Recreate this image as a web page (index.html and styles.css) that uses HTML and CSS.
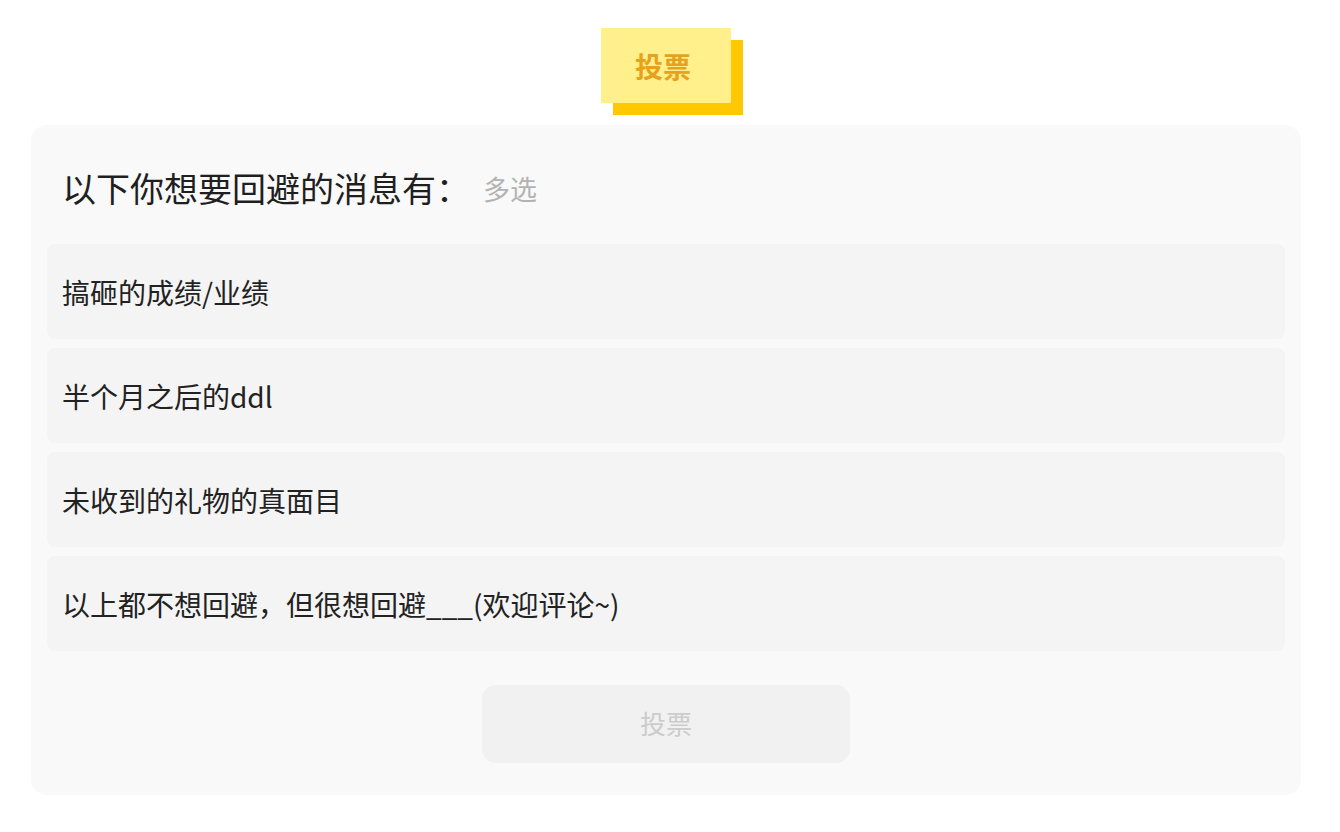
FILE: index.html
```html
<!DOCTYPE html>
<html lang="zh">
<head>
<meta charset="utf-8">
<title>投票</title>
<link rel="stylesheet" href="styles.css">
</head>
<body>
<div class="page">
  <div class="badge-wrap">
    <div class="badge">
      <span class="badge-shadow"></span>
      <span class="badge-face">投票</span>
    </div>
  </div>
  <div class="card">
    <div class="title"><span class="title-text">以下你想要回避的消息有：</span><span class="title-tag">多选</span></div>
    <div class="options">
      <div class="option">搞砸的成绩/业绩</div>
      <div class="option">半个月之后的ddl</div>
      <div class="option">未收到的礼物的真面目</div>
      <div class="option">以上都不想回避，但很想回避___(欢迎评论~)</div>
    </div>
    <div class="actions">
      <button class="vote-btn" type="button">投票</button>
    </div>
  </div>
</div>
</body>
</html>
```
FILE: styles.css
```css
* { box-sizing: border-box; }
html, body { margin: 0; padding: 0; background: #ffffff; }
body {
  font-family: "Noto Sans CJK SC", "Noto Sans", "Liberation Sans", sans-serif;
  color: #222222;
}
.page {
  width: 1270px;
  margin: 0 0 0 31px;
  padding-top: 28px;
}
.badge-wrap {
  display: flex;
  justify-content: center;
  padding-bottom: 10px;
}
.badge {
  position: relative;
  width: 142px;
  height: 87px;
  margin-left: 12px;
}
.badge-shadow {
  position: absolute;
  left: 12px;
  top: 12px;
  width: 130px;
  height: 75px;
  background: #ffc800;
}
.badge-face {
  position: absolute;
  left: 0;
  top: 0;
  width: 130px;
  height: 75px;
  background: #fff08c;
  display: flex;
  align-items: center;
  justify-content: center;
  padding-right: 6px;
  font-size: 28px;
  font-weight: 700;
  color: #e6a21c;
}
.card {
  background: #f9f9f9;
  border-radius: 16px;
  padding: 16px 16px 32px;
}
.title {
  display: flex;
  align-items: center;
  padding: 0 15px;
  height: 94px;
  margin-bottom: 9px;
}
.title-text {
  font-size: 34px;
  line-height: 40px;
  color: #1f1f1f;
}
.title-tag {
  font-size: 27px;
  color: #b3b3b3;
  margin-left: 13px;
}
.options {
  display: flex;
  flex-direction: column;
  gap: 9px;
}
.option {
  height: 95px;
  background: #f4f4f4;
  border-radius: 8px;
  display: flex;
  align-items: center;
  padding: 0 15px;
  font-size: 28px;
  color: #222222;
}
.actions {
  display: flex;
  justify-content: center;
  padding-top: 34px;
}
.vote-btn {
  width: 368px;
  height: 78px;
  border: none;
  border-radius: 14px;
  background: #f1f1f1;
  color: #cccccc;
  font-family: inherit;
  font-size: 26px;
  line-height: 1;
  padding: 0 0 2px;
}
```
